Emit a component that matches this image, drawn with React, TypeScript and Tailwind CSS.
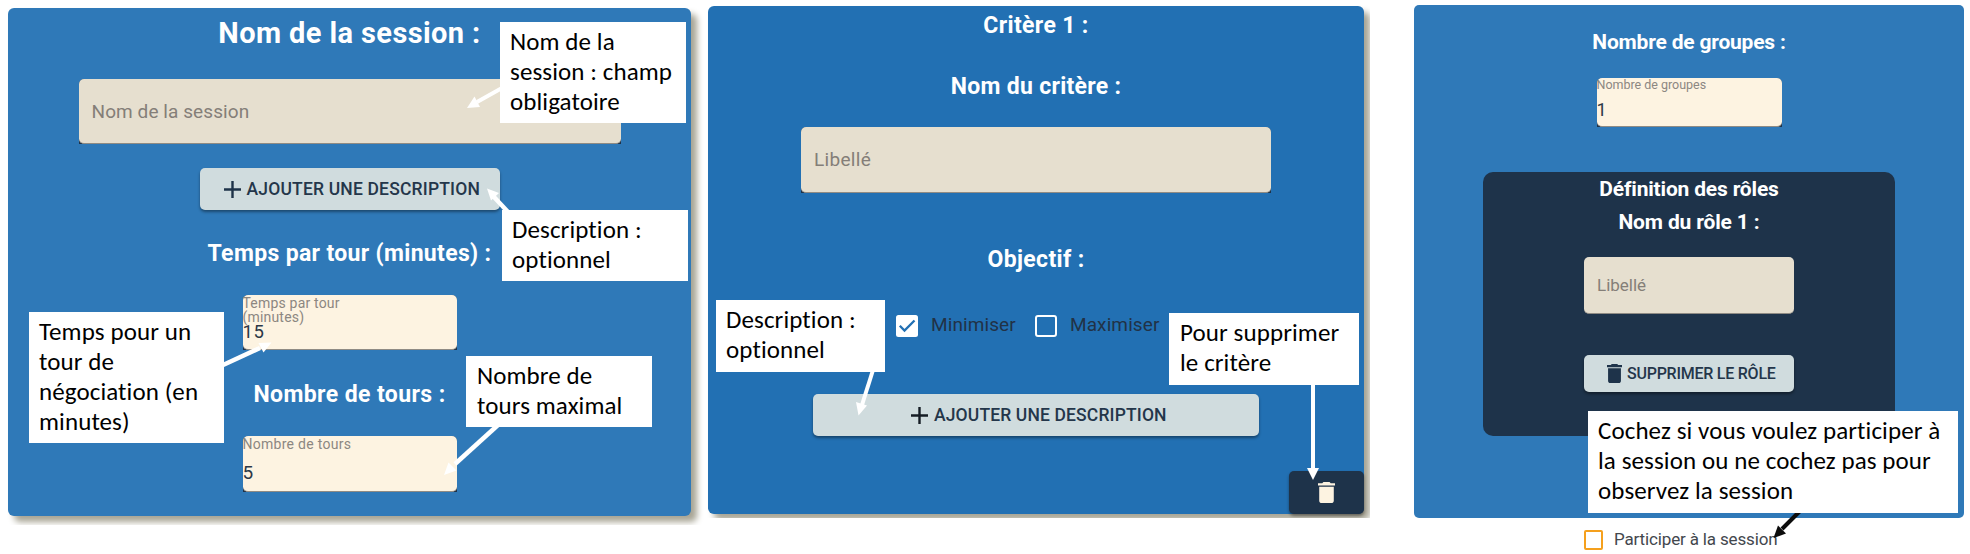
import type { ReactNode } from "react";

function Plus({ className }: { className: string }) {
  return (
    <svg viewBox="0 0 17 17" className={`h-[17px] w-[17px] shrink-0 ${className}`} fill="currentColor">
      <path d="M7.3 0h2.4v7.3H17v2.4H9.7V17H7.3V9.7H0V7.3h7.3z" />
    </svg>
  );
}

function Trash({ className }: { className: string }) {
  return (
    <svg viewBox="5 3 14 18" preserveAspectRatio="none" className={`shrink-0 ${className}`} fill="currentColor">
      <path d="M6 19c0 1.100.9 2 2 2h8c1.100 0 2-.9 2-2V7H6v12zM19 4h-3.500l-1-1h-5l-1 1H5v2h14V4z" />
    </svg>
  );
}

function Callout({ className, children }: { className: string; children: ReactNode }) {
  return (
    <div
      className={`absolute bg-white pt-[5px] font-['Carlito','Calibri','Lato',sans-serif] text-[25px] leading-[30px] tracking-[0.1px] whitespace-nowrap text-black ${className}`}
    >
      {children}
    </div>
  );
}

function EmptyField({ className, label }: { className: string; label: string }) {
  return (
    <div className={`bg-[#1e334a] ${className}`}>
      <div className="flex h-full items-center rounded-[5px] border-b border-[#8f8b84] bg-[#e6dfcf] pt-[2px] pl-[13px] text-[#847e78]">
        {label}
      </div>
    </div>
  );
}

function NumberField({ className, label, value }: { className: string; label: ReactNode; value: ReactNode }) {
  return (
    <div className={`rounded-t-[5px] bg-[#1e334a] ${className}`}>
      <div className="h-full rounded-[5px] border-b border-[#8f8b84] bg-[#fdf3e1] text-[#8c8781]">
        {label}
        {value}
      </div>
    </div>
  );
}

const flatButton =
  "flex items-center rounded-[5px] bg-[#d0dcde] font-medium text-[#24364a] shadow-[0_2px_3px_rgba(0,0,0,0.4)] whitespace-nowrap";

function SessionPanel() {
  return (
    <div className="h-[525px] w-[706px] overflow-hidden pt-2 pl-2">
      <section className="relative flex h-[508px] w-[683px] flex-col items-center rounded-[6px] bg-[#2f79b8] pt-[8px] shadow-[6px_6px_6px_#a8a595]">
        <h1 className="text-[29px] leading-[34px] font-bold tracking-[0.4px] whitespace-nowrap text-white">
          Nom de la session :
        </h1>
        <EmptyField
          className="mt-[29px] h-[65px] w-[542px] rounded-t-[5px] text-[19px] tracking-[0.08px]"
          label="Nom de la session"
        />
        <button className={`${flatButton} mt-6 h-[42px] w-[300px] gap-1.5 pl-[24px] text-[17.5px] tracking-[0.18px]`}>
          <Plus className="text-[#1e3349]" />
          AJOUTER UNE DESCRIPTION
        </button>
        <h2 className="mt-8 text-[23px] leading-6 font-bold tracking-[0.34px] whitespace-nowrap text-white">
          Temps par tour (minutes) :
        </h2>
        <NumberField
          className="mt-[29px] h-[55px] w-[214px]"
          label={
            <div className="pt-[1px] text-[14px] leading-[14px] tracking-[0.19px]">
              Temps par tour
              <br />
              (minutes)
            </div>
          }
          value={<div className="-mt-[1px] text-[18.5px] leading-[18px] tracking-[0.6px] text-[#2c3746]">15</div>}
        />
        <h2 className="mt-[33px] text-[23px] leading-6 font-bold tracking-[0.4px] whitespace-nowrap text-white">
          Nombre de tours :
        </h2>
        <NumberField
          className="mt-[29px] h-14 w-[214px]"
          label={<div className="pt-[1px] text-[14px] leading-[14px] tracking-[0.28px]">Nombre de tours</div>}
          value={<div className="mt-[12px] text-[19px] leading-[20px] text-[#2c3746]">5</div>}
        />
        <svg className="absolute top-0 left-0 h-[508px] w-[683px]" viewBox="8 8 683 508" fill="#fff" stroke="#fff">
          <path d="M502 88L477 102" strokeWidth="4" />
          <path stroke="none" d="M467 108l7.500-11.500 5.500 10.500z" />
          <path d="M508 212L494 197" strokeWidth="4.500" />
          <path stroke="none" d="M487 188.500l12 4.500-8 7.500z" />
          <path d="M222 365.500L260 348" strokeWidth="4.500" />
          <path stroke="none" d="M271.500 342.500l-13 .5 5 9.500z" />
          <path d="M498 425L455 464" strokeWidth="4.500" />
          <path stroke="none" d="M444 475l4.500-12.500 8 8z" />
        </svg>
        <Callout className="top-[14px] left-[492px] h-[101px] w-[186px] pl-[10px]">
          Nom de la
          <br />
          session : champ
          <br />
          obligatoire
        </Callout>
        <Callout className="top-[202px] left-[494px] h-[71px] w-[186px] pl-[10px]">
          Description :
          <br />
          optionnel
        </Callout>
        <Callout className="top-[304px] left-[21px] h-[131px] w-[195px] pl-[10px]">
          Temps pour un
          <br />
          tour de
          <br />
          négociation (en
          <br />
          minutes)
        </Callout>
        <Callout className="top-[348px] left-[458px] h-[71px] w-[186px] pl-[11px]">
          Nombre de
          <br />
          tours maximal
        </Callout>
      </section>
    </div>
  );
}

function CriterionPanel() {
  return (
    <div className="h-[518px] w-[664px] overflow-hidden pt-[6px] pl-[2px]">
      <section className="relative flex h-[508px] w-[656px] flex-col items-center rounded-[6px] bg-[#2270b3] pt-[8px] shadow-[6px_6px_6px_#a8a595]">
        <h2 className="text-[23px] leading-6 font-bold tracking-[0.35px] whitespace-nowrap text-white">
          Critère 1 :
        </h2>
        <h2 className="mt-[37px] text-[23px] leading-6 font-bold tracking-[0.3px] whitespace-nowrap text-white">
          Nom du critère :
        </h2>
        <EmptyField
          className="mt-[28px] h-[66px] w-[470px] rounded-t-[5px] text-[19px] tracking-[0.3px]"
          label="Libellé"
        />
        <h2 className="mt-[55px] text-[23px] leading-6 font-bold tracking-[0.35px] whitespace-nowrap text-white">
          Objectif :
        </h2>
        <div className="mt-[42px] flex h-[23px] w-[280px] items-center text-[19px] tracking-[0.1px] text-[#213246]">
          <svg viewBox="0 0 22 22" className="h-[22px] w-[22px] shrink-0">
            <rect width="22" height="22" rx="2.500" fill="#fff" />
            <path d="M3.800 10.800l4.700 4.700 10-10" fill="none" stroke="#2270b3" strokeWidth="2.300" />
          </svg>
          <span className="ml-[13px] w-[104px]">Minimiser</span>
          <span className="h-[22px] w-[22px] shrink-0 rounded-[3px] border-2 border-white" />
          <span className="ml-[13px]">Maximiser</span>
        </div>
        <button
          className={`${flatButton} mt-[57px] h-[42px] w-[446px] gap-1.5 pl-[98px] text-[17.5px] tracking-[0.14px]`}
        >
          <Plus className="text-[#151c24]" />
          AJOUTER UNE DESCRIPTION
        </button>
        <button className="mt-[35px] flex h-[43px] w-[75px] items-center justify-center self-end rounded-[5px] bg-[#1e334a] shadow-[0_2px_3px_rgba(0,0,0,0.4)]">
          <Trash className="h-[21px] w-[17px] text-[#fdf3e1]" />
        </button>
        <svg className="absolute top-0 left-0 h-[508px] w-[656px]" viewBox="708 6 656 508" fill="#fff" stroke="#fff">
          <path d="M873 370L862 405" strokeWidth="4" />
          <path stroke="none" d="M858.500 415.500l-2.500-13.500 11 3.500z" />
          <path d="M1313 384v86" strokeWidth="4" />
          <path stroke="none" d="M1313 480l-6-12h12z" />
        </svg>
        <Callout className="top-[294px] left-[8px] h-[72px] w-[169px] pl-[10px]">
          Description :
          <br />
          optionnel
        </Callout>
        <Callout className="top-[307px] left-[461px] h-[72px] w-[190px] pl-[11px]">
          Pour supprimer
          <br />
          le critère
        </Callout>
      </section>
    </div>
  );
}

function GroupsPanel() {
  return (
    <div className="relative ml-[44px] flex w-[550px] flex-col pt-[5px]">
      <section className="flex h-[513px] flex-col items-center rounded-[5px] bg-[#2f79b8] pt-[25px] text-white">
        <h2 className="text-[21px] leading-6 font-bold tracking-[-0.2px] whitespace-nowrap">Nombre de groupes :</h2>
        <NumberField
          className="mt-[24px] h-[49px] w-[185px]"
          label={<div className="text-[12.5px] leading-[14px] tracking-[-0.02px]">Nombre de groupes</div>}
          value={<div className="mt-[8px] text-[18px] leading-[20px] text-[#2c3746]">1</div>}
        />
        <div className="mt-[45px] flex h-[264px] w-[412px] flex-col items-center rounded-[10px] bg-[#1e334a] pt-[5px]">
          <h2 className="text-[21px] leading-6 font-bold tracking-[-0.18px] whitespace-nowrap">Définition des rôles</h2>
          <h3 className="mt-[9px] text-[21px] leading-6 font-bold tracking-[-0.15px] whitespace-nowrap">
            Nom du rôle 1 :
          </h3>
          <EmptyField className="mt-[23px] h-[57px] w-[210px] text-[17px] tracking-[-0.02px]" label="Libellé" />
          <button className={`${flatButton} mt-[41px] h-[37px] w-[210px] gap-[5px] pl-[23px] text-[16px] tracking-[-0.24px]`}>
            <Trash className="h-[19px] w-[15px] text-[#1e334a]" />
            SUPPRIMER LE RÔLE
          </button>
        </div>
      </section>
      <label className="mt-[12px] flex h-[20px] items-center pl-[170px] text-[17px] tracking-[-0.15px] text-[#43474d]">
        <span className="h-[20px] w-[19px] rounded-[2px] border-2 border-[#f5a01d]" />
        <span className="ml-[11px] whitespace-nowrap">Participer à la session</span>
      </label>
      <svg className="absolute top-0 left-0 h-[554px] w-[550px]" viewBox="1415 0 550 554" fill="#0c0c0c" stroke="#0c0c0c">
        <path d="M1801 511L1783 529" strokeWidth="4" />
        <path stroke="none" d="M1774.500 538l4.500-12.500 8 8z" />
      </svg>
      <Callout className="top-[411px] left-[174px] h-[102px] w-[370px] pl-[10px]">
        Cochez si vous voulez participer à
        <br />
        la session ou ne cochez pas pour
        <br />
        observez la session
      </Callout>
    </div>
  );
}

export default function App() {
  return (
    <main className="flex h-[554px] w-[1970px] items-start overflow-hidden bg-white font-['Roboto',sans-serif]">
      <SessionPanel />
      <CriterionPanel />
      <GroupsPanel />
    </main>
  );
}
